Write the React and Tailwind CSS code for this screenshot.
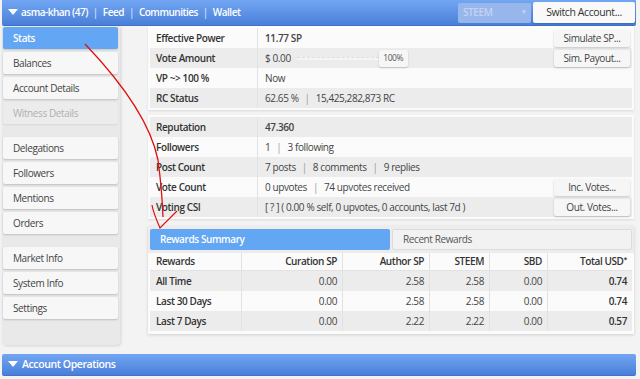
import React from "react";

const Sep = () => <span className="mx-[6px] text-[#9a9a9a]">|</span>;
const TSep = () => <span className="mx-[5px] text-[#e4ecfb] font-normal">|</span>;

function SideItem({ label, active, disabled }) {
  return (
    <div
      className={
        "h-[22px] flex items-center pl-[10px] rounded-[2px] text-[10px] " +
        (active
          ? "bg-[#62a6f4] text-white font-semibold shadow-[0_1px_2px_rgba(0,0,0,0.15)]"
          : disabled
          ? "bg-[#ececec] text-[#b0b0b0] shadow-[0_1px_2px_rgba(0,0,0,0.08)]"
          : "bg-[#f7f7f7] text-[#444] shadow-[0_1px_2px_rgba(0,0,0,0.18)]")
      }
    >
      {label}
    </div>
  );
}

function Btn({ children }) {
  return (
    <div className="h-[17px] w-[76px] flex items-center justify-center bg-[#f6f6f6] rounded-[2px] text-[10px] text-[#444] shadow-[0_1px_2px_rgba(0,0,0,0.22)]">
      {children}
    </div>
  );
}

function Row({ label, gray, children, btn, boldVal }) {
  return (
    <div className={"h-[20px] flex items-center " + (gray ? "bg-[#ececec]" : "bg-[#fbfbfb]")}>
      <div className="w-[108px] h-full flex items-center pl-[6px] font-semibold text-[#333] border-r border-[#e2e2e2]">
        {label}
      </div>
      <div className={"flex-1 flex items-center pl-[7px] text-[#444] " + (boldVal ? "font-semibold" : "")}>
        {children}
      </div>
      {btn && <div className="pr-[2px]">{btn}</div>}
    </div>
  );
}

function RRow({ cells, gray, header }) {
  return (
    <div
      className={
        "grid grid-cols-[92px_101px_87px_60px_58px_84px] " +
        (header ? "h-[18px] bg-[#fbfbfb] font-semibold text-[#333] border-b border-[#e2e2e2]" : "h-[20px] text-[#444] " + (gray ? "bg-[#ececec]" : "bg-[#fbfbfb]"))
      }
    >
      {cells.map((c, i) => (
        <div
          key={i}
          className={
            "flex items-center " +
            (i === 0 ? "pl-[6px] font-semibold text-[#333] " : "justify-end pr-[5px] ") +
            (i < 5 ? "border-r border-[#e2e2e2] " : "") +
            (i === 5 && !header ? "font-semibold text-[#333]" : "")
          }
        >
          {c}
        </div>
      ))}
    </div>
  );
}

export default function App() {
  return (
    <div className="relative w-[640px] h-[379px] overflow-hidden bg-[#f3f3f3] text-[10px] tracking-[-0.4px] font-['Open_Sans',sans-serif]">
      {/* top bar */}
      <div className="mx-[2px] w-[634px] h-[26px] flex items-center bg-gradient-to-b from-[#72a6f3] to-[#4a7fd8] border-b border-[#3f72c8] rounded-b-[2px]">
        <svg width="10" height="7" viewBox="0 0 10 7" className="ml-[6px] mr-[3px]">
          <path d="M0 0 L10 0 L5 6 Z" fill="#fff" />
        </svg>
        <div className="flex items-center text-white font-semibold text-[10px] tracking-[-0.5px]">
          <span>asma-khan (47)</span>
          <TSep />
          <span>Feed</span>
          <TSep />
          <span>Communities</span>
          <TSep />
          <span>Wallet</span>
        </div>
        <div className="ml-auto flex items-center gap-[2px] mr-[1px]">
          <div className="w-[73px] h-[20px] flex items-center justify-between px-[5px] bg-[#97b7ec] rounded-[2px] text-[#c4d4f2] text-[10px] font-semibold">
            <span>STEEM</span>
            <span className="text-[7px]">▾</span>
          </div>
          <div className="w-[102px] h-[21px] flex items-center justify-center bg-[#f9f9f9] rounded-[2px] text-[#333] text-[10.5px] shadow-[0_1px_2px_rgba(0,0,0,0.2)]">
            Switch Account...
          </div>
        </div>
      </div>

      <div className="flex">
        {/* sidebar */}
        <div className="ml-[2px] w-[118px] h-[319px] bg-[#e9e9e9] rounded-b-[4px] shadow-[1px_1px_3px_rgba(0,0,0,0.12)] pt-[1px] pl-[1px] pr-[2px] flex flex-col">
          <div className="flex flex-col gap-[3px]">
            <SideItem label="Stats" active />
            <SideItem label="Balances" />
            <SideItem label="Account Details" />
            <SideItem label="Witness Details" disabled />
          </div>
          <div className="flex flex-col gap-[3px] mt-[13px]">
            <SideItem label="Delegations" />
            <SideItem label="Followers" />
            <SideItem label="Mentions" />
            <SideItem label="Orders" />
          </div>
          <div className="flex flex-col gap-[3px] mt-[13px]">
            <SideItem label="Market Info" />
            <SideItem label="System Info" />
            <SideItem label="Settings" />
          </div>
        </div>

        {/* main */}
        <div className="ml-[28px] w-[486px] flex flex-col">
          <div className="bg-[#fbfbfb] px-[2px] pt-[2px] pb-[2px] shadow-[0_1px_2px_rgba(0,0,0,0.1)]">
            <Row label="Effective Power" boldVal btn={<Btn>Simulate SP...</Btn>}>
              11.77 SP
            </Row>
            <Row label="Vote Amount" gray btn={<Btn>Sim. Payout...</Btn>}>
              <span>$ 0.00</span>
              <div className="ml-[6px] w-[82px] h-[3px] border-t border-dashed border-[#dedede] bg-[#f4f4f4]"></div>
              <div className="w-[29px] h-[17px] flex items-center justify-center bg-[#f6f6f6] rounded-[2px] text-[8.5px] text-[#555] shadow-[0_1px_2px_rgba(0,0,0,0.2)]">
                100%
              </div>
            </Row>
            <Row label="VP ~> 100 %">Now</Row>
            <Row label="RC Status" gray>
              62.65 %<Sep />15,425,282,873 RC
            </Row>
          </div>

          <div className="mt-[5px] bg-[#fbfbfb] px-[2px] pt-[2px] pb-[2px] shadow-[0_1px_2px_rgba(0,0,0,0.1)]">
            <Row label="Reputation" gray boldVal>
              47.360
            </Row>
            <Row label="Followers">
              1<Sep />3 following
            </Row>
            <Row label="Post Count" gray>
              7 posts<Sep />8 comments<Sep />9 replies
            </Row>
            <Row label="Vote Count" btn={<Btn>Inc. Votes...</Btn>}>
              0 upvotes<Sep />74 upvotes received
            </Row>
            <Row label="Voting CSI" gray btn={<Btn>Out. Votes...</Btn>}>
              [ ? ] ( 0.00 % self, 0 upvotes, 0 accounts, last 7d )
            </Row>
          </div>

          <div className="mt-[7px] bg-[#fbfbfb] shadow-[0_1px_3px_rgba(0,0,0,0.15)]">
            <div className="bg-[#ececec] px-[2px] py-[3px] flex gap-[2px]">
              <div className="w-[240px] h-[21px] flex items-center pl-[10px] bg-[#62a6f4] text-white font-semibold rounded-[2px]">
                Rewards Summary
              </div>
              <div className="w-[240px] h-[21px] flex items-center pl-[10px] bg-[#f2f2f2] text-[#555] border border-[#dcdcdc] rounded-[2px]">
                Recent Rewards
              </div>
            </div>
            <div className="px-[2px] pb-[3px]">
              <RRow header cells={["Rewards", "Curation SP", "Author SP", "STEEM", "SBD", <span key="t">Total USD<sup className="text-[7px]">*</sup></span>]} />
              <RRow gray cells={["All Time", "0.00", "2.58", "2.58", "0.00", "0.74"]} />
              <RRow cells={["Last 30 Days", "0.00", "2.58", "2.58", "0.00", "0.74"]} />
              <RRow gray cells={["Last 7 Days", "0.00", "2.22", "2.22", "0.00", "0.57"]} />
            </div>
          </div>
        </div>
      </div>

      {/* account operations */}
      <div className="mt-[9px] mx-[2px] w-[634px] h-[22px] flex items-center bg-gradient-to-b from-[#72a6f3] to-[#4a7fd8] border-b border-[#3f72c8] rounded-[2px]">
        <svg width="10" height="7" viewBox="0 0 10 7" className="ml-[6px] mr-[4px]">
          <path d="M0 0 L10 0 L5 6 Z" fill="#fff" />
        </svg>
        <span className="text-white font-semibold text-[10.5px]">Account Operations</span>
      </div>

      {/* red annotation */}
      <svg className="absolute inset-0 pointer-events-none" width="640" height="379" viewBox="0 0 640 379">
        <path d="M85 44 Q148 110 158 160 Q162 190 163 217" stroke="#e01010" strokeWidth="1.3" fill="none" />
        <path d="M152 205 Q153 212 160 228 L177 211" stroke="#e01010" strokeWidth="1.2" fill="none" />
      </svg>
    </div>
  );
}
